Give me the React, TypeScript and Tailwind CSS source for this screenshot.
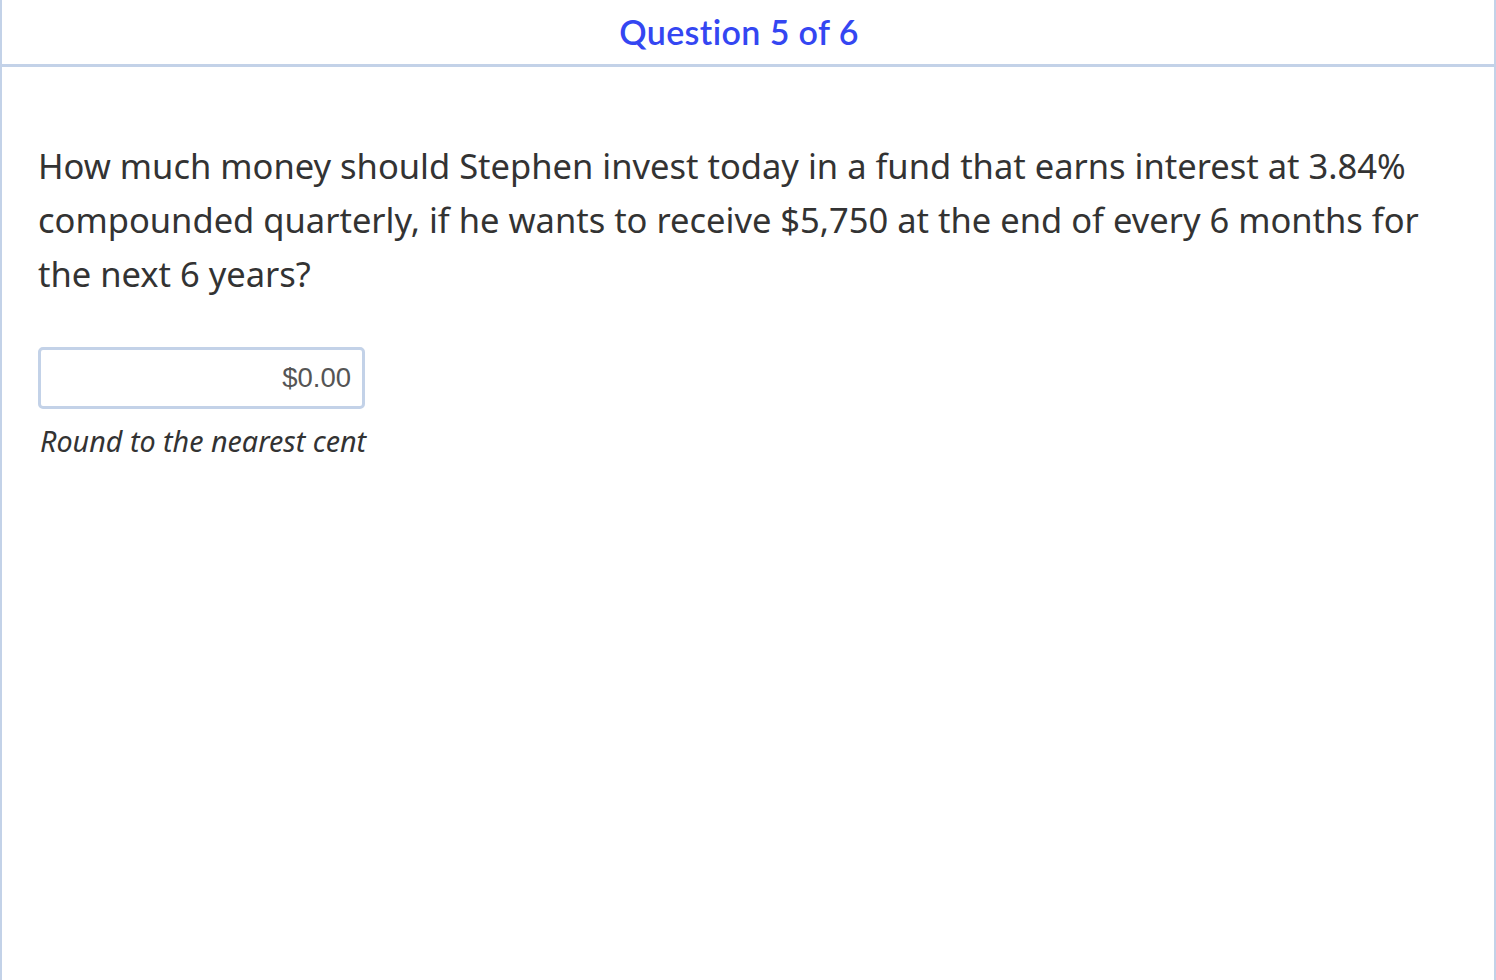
export default function App() {
  return (
    <div className="min-h-screen w-full bg-white">
      <div className="flex h-[980px] flex-col border-x-2 border-[#c3d2e8]">
        {/* Header */}
        <div className="flex h-[67px] shrink-0 items-center justify-center border-b-[3px] border-[#c3d2e8] pr-[18px] pb-[1px]">
          <h1 className="font-['Lato',sans-serif] text-[34px] font-semibold tracking-[0.4px] text-[#3446f2]">
            Question 5 of 6
          </h1>
        </div>

        {/* Content */}
        <div className="px-[36px] pt-[72px]">
          <p className="font-['Noto_Sans',sans-serif] text-[34.5px] leading-[54px] text-[#333333]">
            How much money should Stephen invest today in a fund that earns interest at 3.84%
            compounded quarterly, if he wants to receive $5,750 at the end of every 6 months for
            the next 6 years?
          </p>

          <div className="mt-[46px] flex h-[62px] w-[327px] items-center justify-end rounded-[5px] border-[3px] border-[#c3d2e8] pr-[11px]">
            <span className="font-['Liberation_Sans',sans-serif] text-[27.5px] text-[#555555]">
              $0.00
            </span>
          </div>

          <p className="mt-[13px] pl-[2px] font-['Noto_Sans',sans-serif] text-[28.7px] italic leading-[38px] text-[#333333]">
            Round to the nearest cent
          </p>
        </div>
      </div>
    </div>
  );
}
